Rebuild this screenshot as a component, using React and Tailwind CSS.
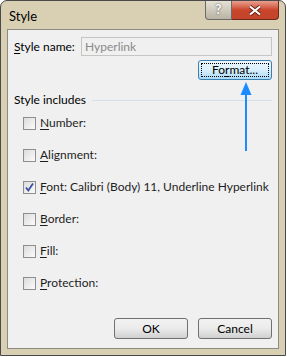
import React from "react";

const font = { fontFamily: 'Lato, "Noto Sans", sans-serif' };

const Check = ({ checked }) => (
  <span className="flex h-[13px] w-[13px] shrink-0 items-center justify-center border border-[#8f8f8f] bg-gradient-to-br from-[#dcdcdc] to-[#fbfbfb]">
    {checked && (
      <svg width="11" height="11" viewBox="0 0 11 11">
        <path d="M2 5.5 L4.3 8.5 L9 1.5" stroke="#3b4fa0" strokeWidth="1.8" fill="none" />
      </svg>
    )}
  </span>
);

const Row = ({ label, underline, rest, checked }) => (
  <div className="flex h-[32px] items-center gap-[4px] pl-[9px]">
    <Check checked={checked} />
    <span className="whitespace-nowrap text-[12px] text-[#1e1e1e]">
      <span className="underline underline-offset-2">{underline}</span>
      {rest}
    </span>
  </div>
);

const Btn = ({ children, className = "" }) => (
  <div
    className={
      "flex h-[21px] w-[74px] items-center justify-center rounded-[3px] border border-[#707070] bg-gradient-to-b from-[#f2f2f2] via-[#ebebeb] to-[#d0d0d0] text-[12px] text-black " +
      className
    }
  >
    {children}
  </div>
);

export default function App() {
  const rows = [
    ["N", "umber:", false],
    ["A", "lignment:", false],
    ["F", "ont: Calibri (Body) 11, Underline Hyperlink", true],
    ["B", "order:", false],
    ["F", "ill:", false],
    ["P", "rotection:", false],
  ];
  return (
    <div className="h-[357px] w-[287px] bg-white" style={font}>
      <div className="flex h-[356px] w-[286px] flex-col rounded-t-[7px] border border-[#4a4a4a] bg-[#d9cfb3] px-[6px] pb-[6px]">
        <div className="flex h-[28px] items-start">
          <span className="pl-[2px] pt-[6px] text-[13px] text-black">Style</span>
          <div className="ml-auto flex">
            <div className="flex h-[19px] w-[27px] items-center justify-center rounded-bl-[4px] border border-t-0 border-[#6b6b6b] bg-gradient-to-b from-[#e6e2d6] to-[#b9b3a3] text-[13px] font-bold text-white [text-shadow:0_0_2px_#333]">
              ?
            </div>
            <div className="flex h-[19px] w-[47px] items-center justify-center rounded-br-[4px] border border-l-0 border-t-0 border-[#6b2a1f] bg-gradient-to-b from-[#e8a090] via-[#c9442a] to-[#c2452a]">
              <svg width="14" height="11" viewBox="0 0 14 11">
                <path d="M2 1.5 L12 9.5 M12 1.5 L2 9.5" stroke="#5a1a10" strokeWidth="3.6" />
                <path d="M2 1.5 L12 9.5 M12 1.5 L2 9.5" stroke="#fff" strokeWidth="2.2" />
              </svg>
            </div>
          </div>
        </div>
        <div className="relative flex flex-1 flex-col border border-[#8d8a80] bg-[#f0f0f0] px-[6px]">
          <div className="flex items-center pt-[7px]">
            <span className="w-[67px] text-[12px] text-black">
              <span className="underline underline-offset-2">S</span>tyle name:
            </span>
            <div className="flex h-[19px] flex-1 items-center border border-[#c5c5c5] bg-[#f0f0f0] pl-[3px] text-[12px] text-[#8a8a8a]">
              Hyperlink
            </div>
          </div>
          <div className="flex justify-end pt-[4px]">
            <div className="h-[20px] w-[74px] rounded-[3px] border border-[#3c7fb1] bg-gradient-to-b from-[#eaf6fd] via-[#d9f0fc] to-[#a7d9f5] p-[2px]">
              <div className="flex h-full items-center justify-center border border-dotted border-black text-[12px] text-black">
                Fo<span className="underline underline-offset-2">r</span>mat...
              </div>
            </div>
          </div>
          <div className="flex items-center gap-[6px] pt-[11px]">
            <span className="text-[12px] text-black">Style includes</span>
            <span className="h-px flex-1 bg-[#d5dfe5]" />
          </div>
          <div className="-mt-[2px] flex flex-col">
            {rows.map(([u, r, c], i) => (
              <Row key={i} underline={u} rest={r} checked={c} />
            ))}
          </div>
          <div className="mt-auto flex justify-end gap-[10px] pb-[9px]">
            <Btn>OK</Btn>
            <Btn>Cancel</Btn>
          </div>
          <svg className="absolute left-[231px] top-[52px]" width="14" height="70" viewBox="0 0 14 70">
            <path d="M7 10 L7 69" stroke="#1a8cff" strokeWidth="2" />
            <path d="M7 0 L12.5 13 L1.5 13 Z" fill="#1a8cff" />
          </svg>
        </div>
      </div>
    </div>
  );
}
